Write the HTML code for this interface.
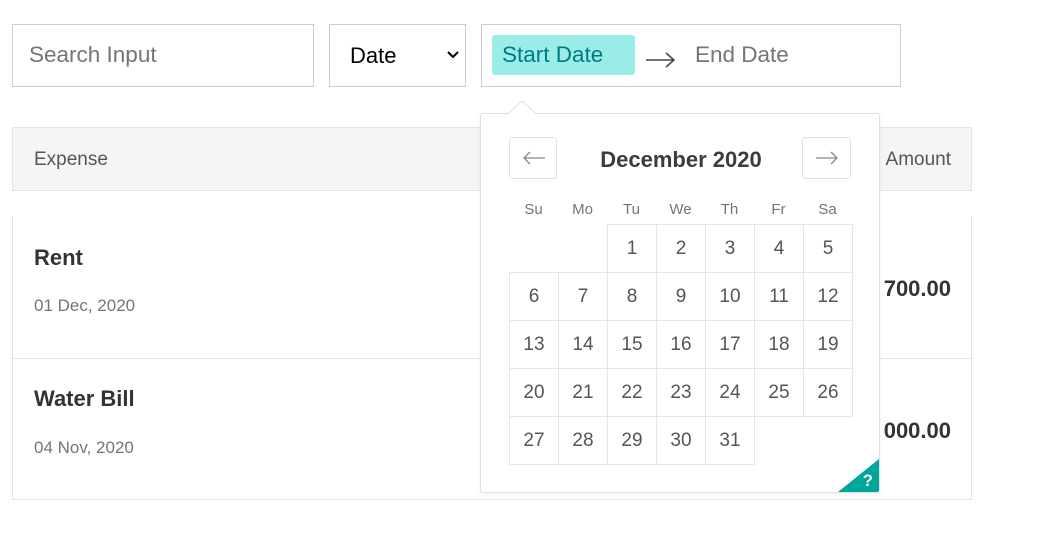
<!DOCTYPE html><html><head><style>
body{margin:0;width:1052px;height:541px;background:#fff;font-family:"Liberation Sans",sans-serif;position:relative;overflow:hidden;color:#333}
.a{position:absolute;box-sizing:border-box}
.cell{position:absolute;width:50px;height:49px;border:1px solid #e4e7e7;box-sizing:border-box;text-align:center;line-height:47px;font-size:19px;color:#555}
.dh{position:absolute;top:201px;width:49px;text-align:center;font-size:15px;color:#757575}
</style></head><body>
<div class="a" style="left:12px;top:24px;width:302px;height:63px;border:1px solid #ccc;font-size:22.5px;color:#757575;padding:17px 16px">Search Input</div>
<div class="a" style="left:329px;top:24px;width:137px;height:63px;border:1px solid #ccc;font-size:22px;color:#000;padding:18px 20px">Date<svg style="position:absolute;left:117px;top:25px" width="12" height="10"><path d="M1 2l5 5 5-5" stroke="#000" stroke-width="2" fill="none"/></svg></div>
<div class="a" style="left:481px;top:24px;width:420px;height:63px;border:1px solid #ccc"></div>
<div class="a" style="left:492px;top:35px;width:143px;height:40px;background:#99ede6;border-radius:3px;color:#007a87;font-size:22.5px;padding:7px 10px">Start Date</div>
<svg class="a" style="left:645px;top:50px" width="32" height="20"><path d="M1 10h28M21 3l8 7-8 7" stroke="#444" stroke-width="1.5" fill="none"/></svg>
<div class="a" style="left:695px;top:42px;font-size:22.5px;color:#757575">End Date</div>
<div class="a" style="left:12px;top:127px;width:960px;height:64px;background:#f5f5f5;border:1px solid #e4e4e4"></div>
<div class="a" style="left:34px;top:149px;font-size:19px;color:#555">Expense</div>
<div class="a" style="left:700px;width:251px;text-align:right;top:149px;font-size:19px;color:#555">Amount</div>
<div class="a" style="left:12px;top:216px;width:960px;height:284px;border:1px solid #e4e4e4;border-top:none"></div>
<div class="a" style="left:12px;top:358px;width:960px;border-top:1px solid #e4e4e4"></div>
<div class="a" style="left:34px;top:245px;font-size:22px;font-weight:bold">Rent</div>
<div class="a" style="left:34px;top:296px;font-size:17px;color:#757575">01 Dec, 2020</div>
<div class="a" style="left:34px;top:386px;font-size:22px;font-weight:bold">Water Bill</div>
<div class="a" style="left:34px;top:438px;font-size:17px;color:#757575">04 Nov, 2020</div>
<div class="a" style="left:700px;width:251px;text-align:right;top:276px;font-size:22px;font-weight:bold">700.00</div>
<div class="a" style="left:700px;width:251px;text-align:right;top:418px;font-size:22px;font-weight:bold">000.00</div>
<div class="a" style="left:480px;top:113px;width:400px;height:380px;background:#fff;border:1px solid #e0e0e0;border-radius:3px;box-shadow:0 2px 6px rgba(0,0,0,.05);overflow:hidden">
<div class="a" style="left:28px;top:23px;width:48px;height:42px;border:1px solid #dfe2e5;border-radius:3px"><svg style="position:absolute;left:12px;top:13px" width="24" height="14"><path d="M23 7H2M8 1L2 7l6 6" stroke="#888" stroke-width="1.3" fill="none"/></svg></div>
<div class="a" style="left:321px;top:23px;width:49px;height:42px;border:1px solid #dfe2e5;border-radius:3px"><svg style="position:absolute;left:12px;top:13px" width="24" height="14"><path d="M1 7h21M16 1l6 6-6 6" stroke="#888" stroke-width="1.3" fill="none"/></svg></div>
<div class="a" style="left:0;width:400px;top:33px;text-align:center;font-size:22px;font-weight:bold;color:#3c3c3c">December 2020</div>
<div class="a" style="right:0;bottom:0;width:0;height:0;border-left:41px solid transparent;border-bottom:33px solid #00a699"></div>
<div class="a" style="right:6px;bottom:1px;color:#fff;font-size:17px;font-weight:bold">?</div>
</div>
<svg class="a" style="left:508px;top:101px" width="30" height="14"><path d="M0 13L14 0l14 13" fill="#fff" stroke="#e0e0e0"/></svg>
<div id="cal"></div>
<script>
var d=["Su","Mo","Tu","We","Th","Fr","Sa"],h="";
d.forEach(function(x,i){h+='<div class="dh" style="left:'+(509+i*49)+'px">'+x+'</div>'});
for(var n=1;n<=31;n++){var p=n+1,r=Math.floor(p/7),c=p%7;h+='<div class="cell" style="left:'+(509+c*49)+'px;top:'+(224+r*48)+'px">'+n+'</div>'}
document.getElementById('cal').innerHTML=h;
</script>
</body></html>
